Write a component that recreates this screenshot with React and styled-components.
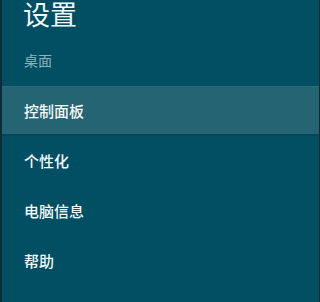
import React from "react";
import styled, { createGlobalStyle } from "styled-components";

const GlobalStyle = createGlobalStyle`
  html, body {
    margin: 0;
    padding: 0;
    background: #024e62;
  }
  body {
    font-family: "Noto Sans CJK SC", "Noto Sans", sans-serif;
  }
`;

const Panel = styled.div`
  box-sizing: border-box;
  width: 320px;
  height: 302px;
  overflow: hidden;
  background: #024e62;
  border-left: 2px solid #0d2c36;
  border-right: 1px solid #0d2c36;
  display: flex;
  flex-direction: column;
`;

const Header = styled.header`
  height: 86px;
  padding-left: 21px;
  display: flex;
  flex-direction: column;
`;

const Title = styled.h1`
  margin: 0;
  font-size: 27px;
  line-height: 28px;
  font-weight: 400;
  color: #f2f7f8;
`;

const Subtitle = styled.div`
  margin-top: 22px;
  padding-left: 1px;
  font-size: 14px;
  line-height: 20px;
  color: #8db2bc;
`;

const Menu = styled.ul`
  list-style: none;
  margin: 0;
  padding: 0;
`;

const MenuItem = styled.li`
  box-sizing: border-box;
  height: 50px;
  padding-left: 22px;
  display: flex;
  align-items: center;
  font-size: 15px;
  font-weight: 500;
  color: #f4f8f9;
  background: ${({ $active }) => ($active ? "#256473" : "transparent")};
  border-top: 1px solid ${({ $active }) => ($active ? "#2d6b7a" : "transparent")};
  border-bottom: 2px solid ${({ $active }) => ($active ? "#04475a" : "transparent")};
`;

const items = ["控制面板", "个性化", "电脑信息", "帮助"];

const App = () => {
  return (
    <>
      <GlobalStyle />
      <Panel>
        <Header>
          <Title>设置</Title>
          <Subtitle>桌面</Subtitle>
        </Header>
        <Menu>
          {items.map((label, index) => (
            <MenuItem key={label} $active={index === 0}>
              {label}
            </MenuItem>
          ))}
        </Menu>
      </Panel>
    </>
  );
};

export default App;
